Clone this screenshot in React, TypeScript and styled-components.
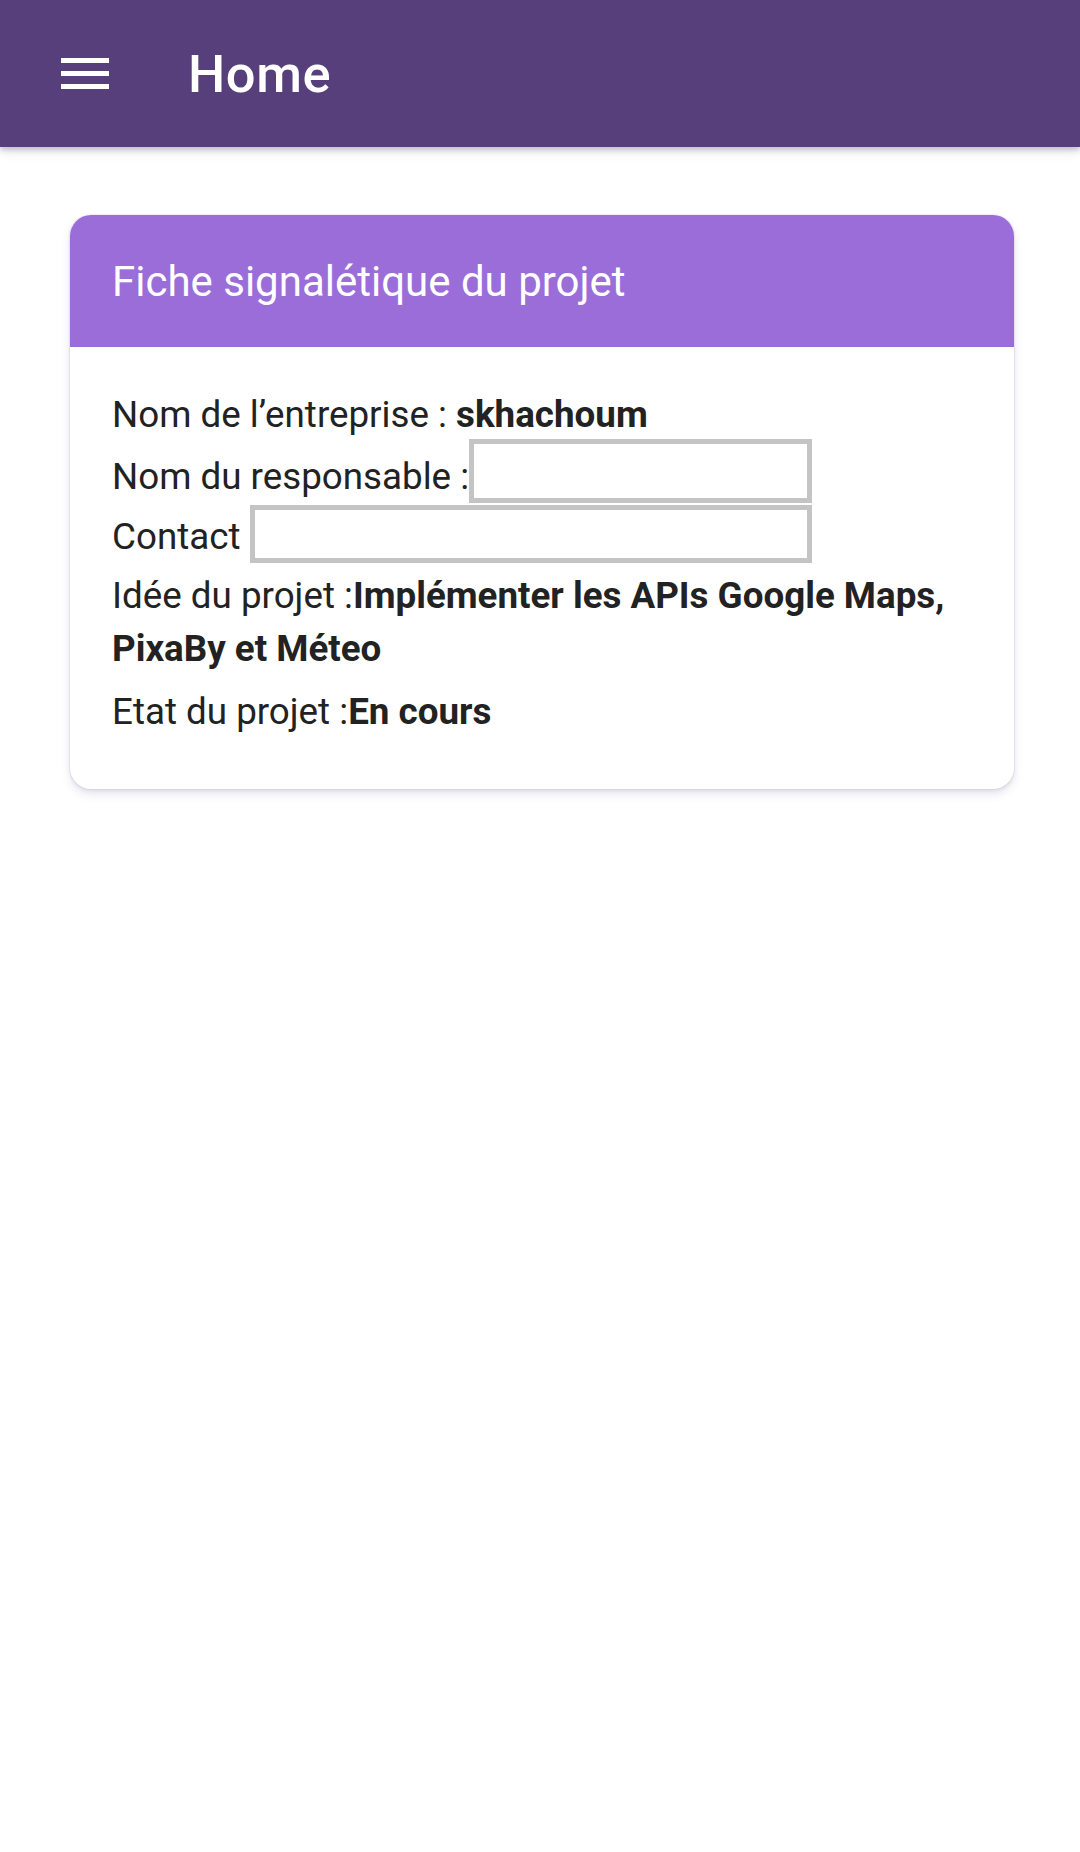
import React from 'react';
import styled, { createGlobalStyle } from 'styled-components';

const GlobalStyle = createGlobalStyle`
    html, body {
        margin: 0;
        padding: 0;
        background: #ffffff;
        font-family: Roboto, "Noto Sans", "Liberation Sans", sans-serif;
    }
`;

const Page = styled.div`
    width: 1080px;
    min-height: 1852px;
    background: #ffffff;
`;

const Toolbar = styled.header`
    display: flex;
    align-items: center;
    height: 147px;
    padding-left: 61px;
    background: #573f7c;
    box-shadow: 0 3px 5px rgba(0, 0, 0, 0.18), 0 6px 10px rgba(0, 0, 0, 0.08);
    position: relative;
    z-index: 1;
`;

const MenuButton = styled.button`
    display: flex;
    align-items: center;
    justify-content: center;
    width: 48px;
    height: 40px;
    padding: 0;
    border: none;
    background: transparent;
    cursor: pointer;
`;

const Title = styled.h1`
    margin: 0 0 0 79px;
    color: #ffffff;
    font-size: 52.5px;
    font-weight: 500;
    letter-spacing: 0.6px;
`;

const Content = styled.main`
    padding: 68px 66px 0 70px;
`;

const Card = styled.section`
    width: 944px;
    border-radius: 21px;
    overflow: hidden;
    background: #ffffff;
    box-shadow: 0 0 0 1px rgba(110, 90, 170, 0.08), 0 5px 10px rgba(90, 70, 150, 0.14),
        0 2px 4px rgba(0, 0, 0, 0.06);
`;

const CardHeader = styled.div`
    display: flex;
    align-items: center;
    height: 132px;
    padding: 0 42px;
    background: #9a6dd9;
`;

const CardTitle = styled.h2`
    margin: 0;
    color: #ffffff;
    font-size: 42px;
    font-weight: 400;
`;

const CardBody = styled.div`
    display: flex;
    flex-direction: column;
    padding: 41px 42px 51px;
    color: #222222;
    font-size: 36.75px;
    line-height: 53px;
`;

const Row = styled.div<{ $offset: number; $width?: number }>`
    display: flex;
    align-items: flex-end;
    width: ${(p) => (p.$width ? `${p.$width}px` : 'auto')};
    margin-top: ${(p) => p.$offset}px;
`;

const Text = styled.div`
    white-space: pre-wrap;
`;

const Strong = styled.b`
    font-weight: 700;
`;

const Field = styled.input<{ $height: number }>`
    flex: 1;
    min-width: 0;
    height: ${(p) => p.$height}px;
    box-sizing: border-box;
    margin: 0;
    padding: 0 8px;
    border: 5px solid #c4c4c4;
    background: #ffffff;
    font-size: 34px;
    font-family: inherit;
    outline: none;
`;

const MenuIcon = () => (
    <svg width="48" height="32" viewBox="0 0 48 32">
        <rect x="0" y="0" width="48" height="5" fill="#ffffff" />
        <rect x="0" y="13" width="48" height="5" fill="#ffffff" />
        <rect x="0" y="26" width="48" height="5" fill="#ffffff" />
    </svg>
);

export default function App() {
    return (
        <Page>
            <GlobalStyle />
            <Toolbar>
                <MenuButton aria-label="menu">
                    <MenuIcon />
                </MenuButton>
                <Title>Home</Title>
            </Toolbar>
            <Content>
                <Card>
                    <CardHeader>
                        <CardTitle>Fiche signalétique du projet</CardTitle>
                    </CardHeader>
                    <CardBody>
                        <Row $offset={0}>
                            <Text>
                                Nom de l’entreprise : <Strong>skhachoum</Strong>
                            </Text>
                        </Row>
                        <Row $offset={-2} $width={700}>
                            <Text>Nom du responsable :</Text>
                            <Field $height={64} />
                        </Row>
                        <Row $offset={2} $width={700}>
                            <Text>Contact </Text>
                            <Field $height={58} />
                        </Row>
                        <Row $offset={6}>
                            <Text>
                                Idée du projet :<Strong>Implémenter les APIs Google Maps, PixaBy et Méteo</Strong>
                            </Text>
                        </Row>
                        <Row $offset={10}>
                            <Text>
                                Etat du projet :<Strong>En cours</Strong>
                            </Text>
                        </Row>
                    </CardBody>
                </Card>
            </Content>
        </Page>
    );
}
